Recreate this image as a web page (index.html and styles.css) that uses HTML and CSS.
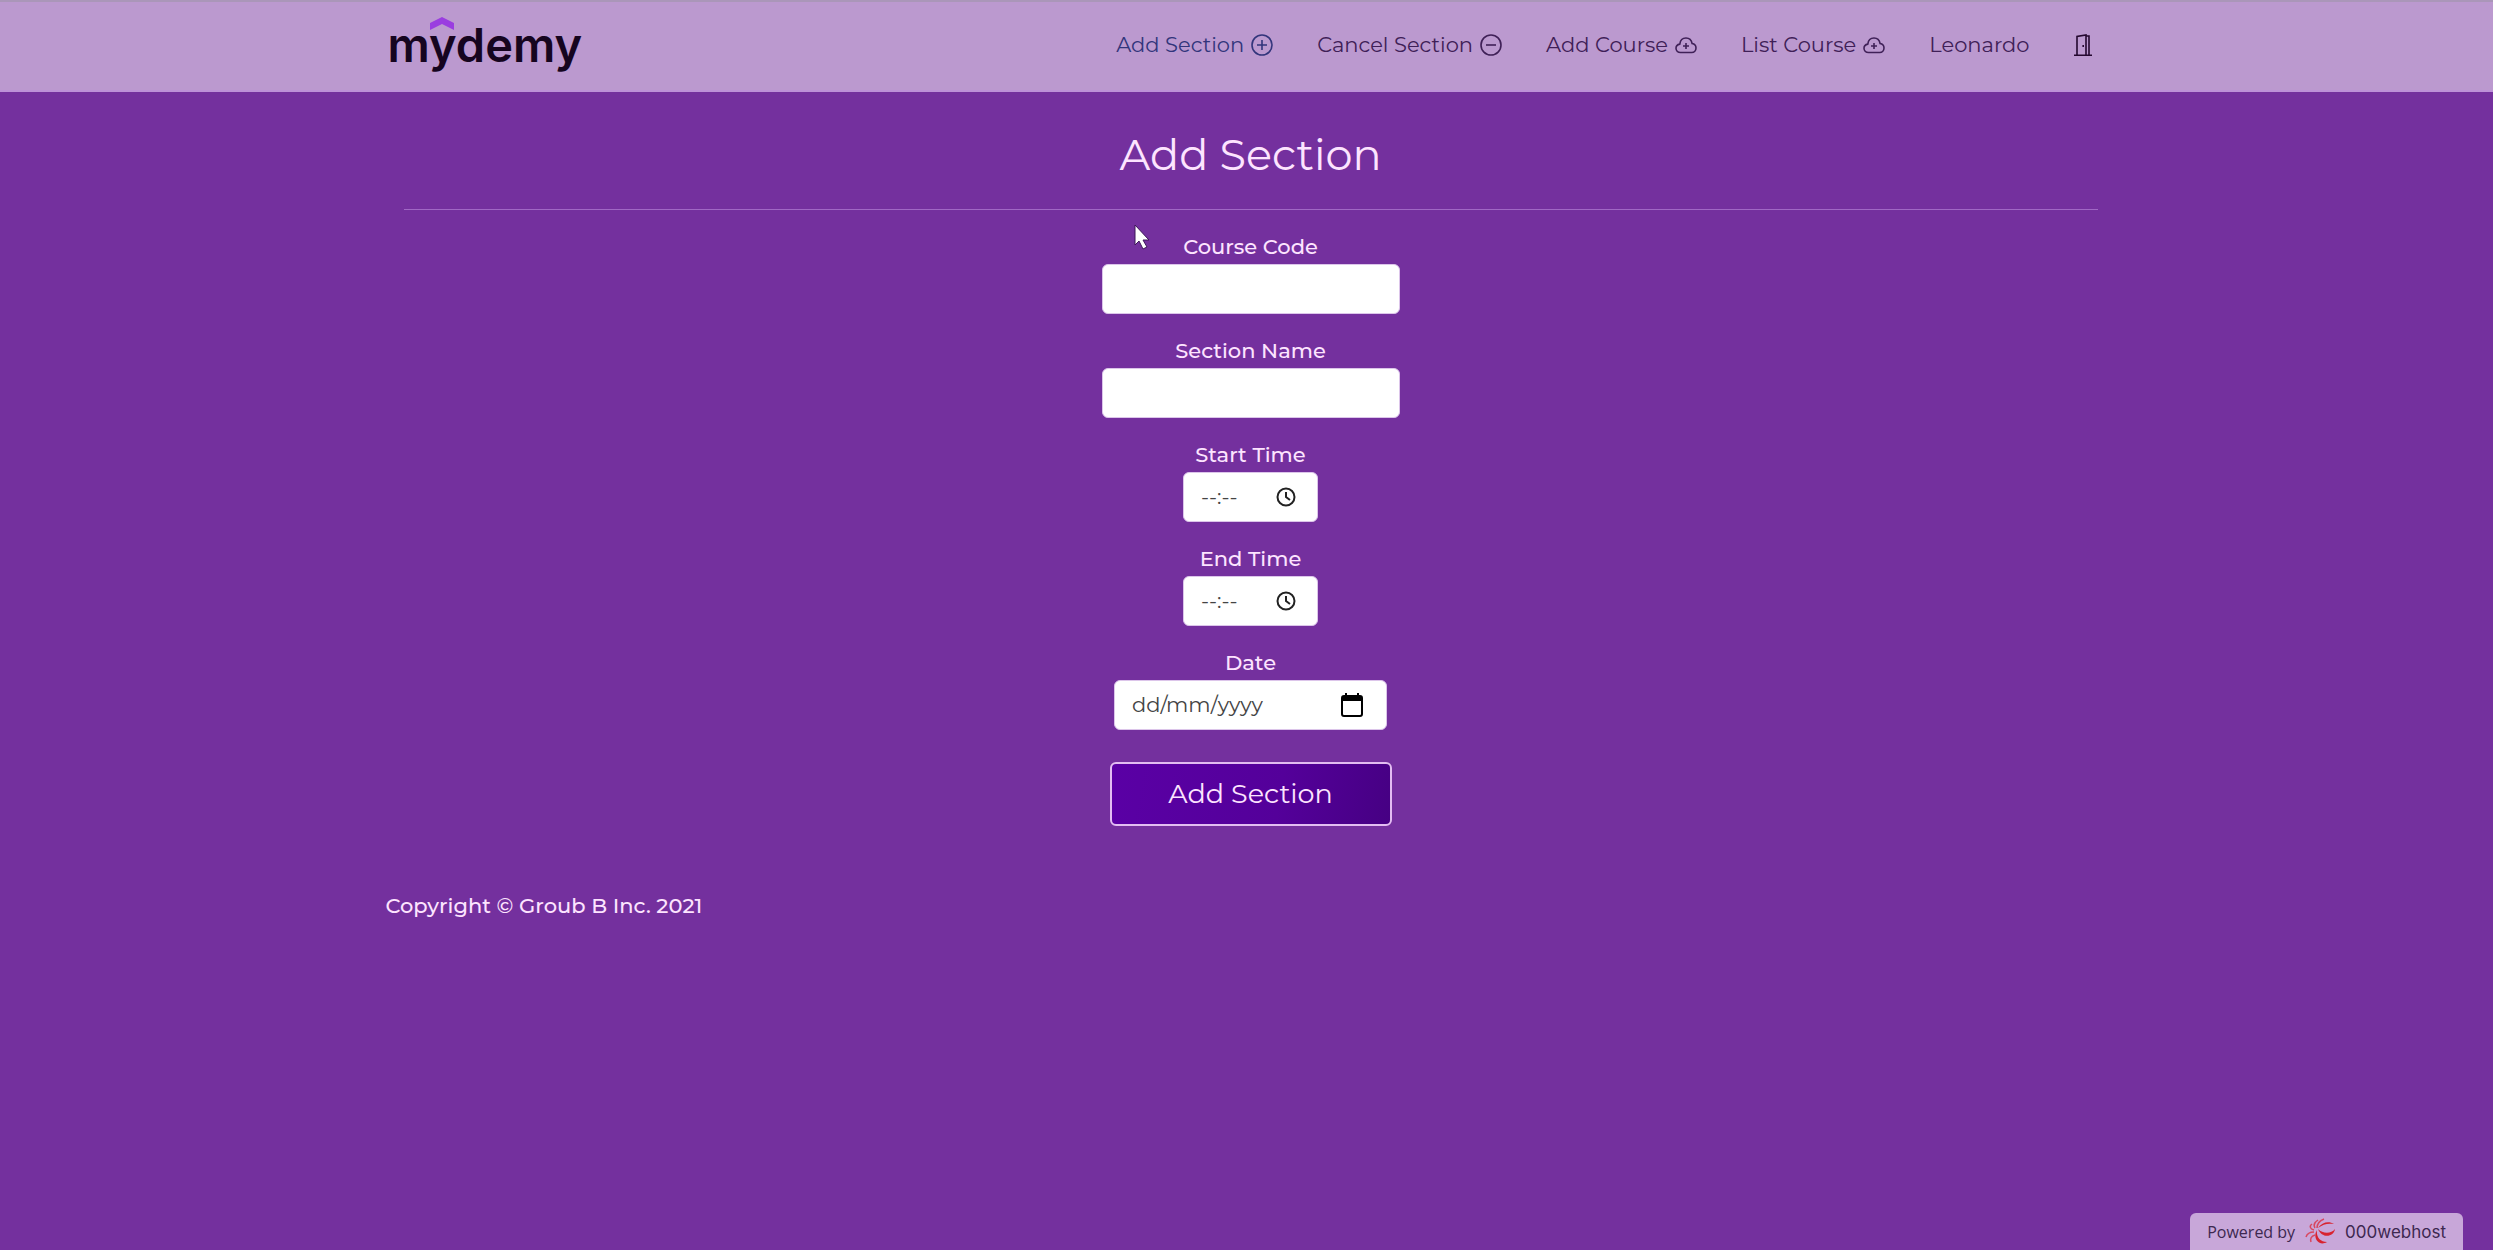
FILE: index.html
```html
<!DOCTYPE html>
<html lang="en">
<head>
<meta charset="utf-8">
<title>mydemy - Add Section</title>
<link rel="stylesheet" href="styles.css">
</head>
<body>
<header class="topbar">
  <div class="container topbar-inner">
    <a class="logo" href="#">mydemy
      <svg class="logo-roof" viewBox="0 0 24 13" aria-hidden="true"><path d="M0 6 12 0l12 6v7L12 7 0 13z" fill="#9a3de0"/></svg>
    </a>
    <nav class="nav">
      <a class="nav-link active" href="#">Add Section
        <svg class="icon" viewBox="0 0 22 22"><circle cx="11" cy="11" r="10"/><path d="M11 6v10M6 11h10"/></svg></a>
      <a class="nav-link" href="#">Cancel Section
        <svg class="icon" viewBox="0 0 22 22"><circle cx="11" cy="11" r="10"/><path d="M6 11h10"/></svg></a>
      <a class="nav-link" href="#">Add Course
        <svg class="icon" viewBox="0 0 22 22"><path d="M5.500 18.500C3 18.500 1 16.800 1 14.300c0-2.200 1.500-3.800 3.800-4.200C5.200 6.500 7.700 4 11 4c3.200 0 5.500 2.200 6.100 5.500 2.300.3 3.900 2.100 3.900 4.500s-1.800 4.500-4.300 4.500zM11 9v6M8 12h6"/></svg></a>
      <a class="nav-link" href="#">List Course
        <svg class="icon" viewBox="0 0 22 22"><path d="M5.500 18.500C3 18.500 1 16.800 1 14.300c0-2.200 1.500-3.800 3.800-4.200C5.200 6.500 7.700 4 11 4c3.200 0 5.500 2.200 6.100 5.500 2.300.3 3.900 2.100 3.900 4.500s-1.800 4.500-4.300 4.500zM11 9v6M8 12h6"/></svg></a>
      <a class="nav-link" href="#">Leonardo</a>
      <a class="nav-link" href="#" aria-label="Log out">
        <svg class="icon icon-door" viewBox="0 0 18 22"><path d="M0 21.200h18M3 21V2.500l9-1.500v20M12 2h3v19M9.200 11v2"/></svg></a>
    </nav>
  </div>
</header>

<main class="content">
  <div class="container">
    <section class="panel">
      <h1 class="title">Add Section</h1>
      <form class="form">
        <div class="field">
          <label for="code">Course Code</label>
          <div class="control control-text"><input id="code" type="text"></div>
        </div>
        <div class="field">
          <label for="name">Section Name</label>
          <div class="control control-text"><input id="name" type="text"></div>
        </div>
        <div class="field">
          <label for="start">Start Time</label>
          <div class="control control-time"><input id="start" type="text" placeholder="--:--">
            <svg class="picker" viewBox="0 0 20 20"><circle cx="10" cy="10" r="8.500"/><path d="M10 5v5l4 3"/></svg></div>
        </div>
        <div class="field">
          <label for="end">End Time</label>
          <div class="control control-time"><input id="end" type="text" placeholder="--:--">
            <svg class="picker" viewBox="0 0 20 20"><circle cx="10" cy="10" r="8.500"/><path d="M10 5v5l4 3"/></svg></div>
        </div>
        <div class="field">
          <label for="date">Date</label>
          <div class="control control-date"><input id="date" type="text" placeholder="dd/mm/yyyy">
            <svg class="picker-date" viewBox="0 0 24 26"><path d="M4 3h1V1h2v2h10V1h2v2h1q3 0 3 3v16q0 3-3 3H4q-3 0-3-3V6q0-3 3-3zM3 9v13q0 1 1 1h16q1 0 1-1V9z" fill="#000" fill-rule="evenodd"/></svg></div>
        </div>
        <button class="submit" type="submit">Add Section</button>
      </form>
    </section>
    <footer class="copyright">Copyright © Groub B Inc. 2021</footer>
  </div>
</main>

<a class="badge" href="#">
  <span class="badge-by">Powered by</span>
  <svg class="badge-logo" viewBox="0 0 32 28"><g fill="#d8232f"><path d="M14 11C19 16 27 16 31 11 30 19 18 21 14 11z"/><path d="M13 12c-1 7 3 12 10 12-8 5-15-4-10-12z"/><path d="M14 10C18 4 25 3 30 6 24 5 19 6 14 10z"/></g><g fill="none" stroke="#d84860" stroke-width="1.500"><path d="M13 10C13 6 15 3 20 1M11 10C9 7 11 4 14 2M10 12C6 11 5 8 8 6M10 14C6 14 3 16 2 19M11 17C7 18 6 21 7 24"/></g></svg>
  <span class="badge-host">000webhost</span>
</a>
<svg class="pointer" viewBox="0 0 16 26" aria-hidden="true"><path d="M1 1v20l4-4 4 8 4-2-4-7h6z" fill="#fff" stroke="#3d1659"/></svg>
</body>
</html>
```

FILE: styles.css
```css
* { box-sizing: border-box; }

body {
  margin: 0;
  min-height: 100vh;
  background: #74309e;
  color: #fde4ff;
  font-family: Montserrat, Inter, sans-serif;
  font-size: 21px;
  line-height: 32px;
}

.container {
  max-width: 1730px;
  margin: 0 auto;
}

.topbar,
.content {
  padding-left: 8px;
}

.topbar {
  background: #bb99cf;
  border-top: 2px solid #aa96b9;
  border-bottom: 2px solid #bd91d8;
}

.topbar-inner {
  display: flex;
  align-items: center;
  justify-content: space-between;
  height: 88px;
  padding: 0 24px 2px 2px;
}

.logo {
  position: relative;
  color: #16051f;
  font-family: Inter, sans-serif;
  font-size: 47px;
  font-weight: 600;
  line-height: 56px;
  text-decoration: none;
}

.logo-roof {
  position: absolute;
  top: 0;
  left: 42px;
  width: 24px;
  height: 13px;
}

.nav {
  display: flex;
  align-items: center;
  gap: 44px;
}

.nav-link {
  display: flex;
  align-items: center;
  gap: 7px;
  color: #3f2057;
  text-decoration: none;
}

.nav-link.active { color: #32357b; }

.icon {
  width: 22px;
  height: 22px;
  fill: none;
  stroke: currentColor;
  stroke-width: 1.6;
}

.icon-door {
  width: 18px;
  stroke: #24082f;
}

.panel {
  display: flex;
  flex-direction: column;
  align-items: center;
  margin: 0 18px;
}

.title {
  align-self: stretch;
  margin: 0 0 22px;
  padding: 36px 0 27px;
  border-bottom: 1px solid #a068c4;
  font-size: 43px;
  font-weight: 400;
  line-height: 54px;
  text-align: center;
}

.form {
  display: flex;
  flex-direction: column;
  align-items: center;
}

.field {
  display: flex;
  flex-direction: column;
  align-items: center;
  gap: 2px;
  margin-bottom: 22px;
  font-weight: 500;
  line-height: 30px;
}

.control {
  display: flex;
  align-items: center;
  height: 50px;
  padding: 0 17px;
  border: 1px solid #dcc5ea;
  border-radius: 6px;
  background: #fff;
}

.control-text { width: 298px; }
.control-time { width: 135px; padding-right: 21px; }
.control-date { width: 273px; padding-right: 22px; }

.control input {
  flex: 1;
  min-width: 0;
  padding: 0;
  border: 0;
  outline: 0;
  background: none;
  color: #333;
  font: inherit;
  font-weight: 400;
}

.control input::placeholder {
  color: #444;
  opacity: 1;
}

.picker {
  width: 20px;
  height: 20px;
  fill: none;
  stroke: #222;
  stroke-width: 2;
}

.picker-date {
  width: 24px;
  height: 26px;
}

.submit {
  width: 282px;
  height: 64px;
  margin-top: 10px;
  border: 2px solid #e3bdf2;
  border-radius: 6px;
  background: linear-gradient(100deg, #5a00a5, #54009a 60%, #460083);
  color: #fde4ff;
  font: inherit;
  font-size: 27px;
}

.copyright {
  padding: 64px 0 24px;
  font-weight: 500;
}

.badge {
  position: fixed;
  right: 30px;
  bottom: 0;
  display: flex;
  align-items: center;
  gap: 9px;
  height: 37px;
  padding: 0 17px;
  border-radius: 6px 6px 0 0;
  background: #c8a7d9;
  color: #3d2850;
  line-height: 24px;
  text-decoration: none;
}

.badge-by {
  font-family: "Open Sans", sans-serif;
  font-size: 16px;
}

.badge-logo {
  width: 32px;
  height: 28px;
}

.badge-host {
  font-family: Inter, sans-serif;
  font-size: 17px;
}

.pointer {
  position: absolute;
  top: 224px;
  left: 1134px;
  width: 16px;
  height: 26px;
}
```
